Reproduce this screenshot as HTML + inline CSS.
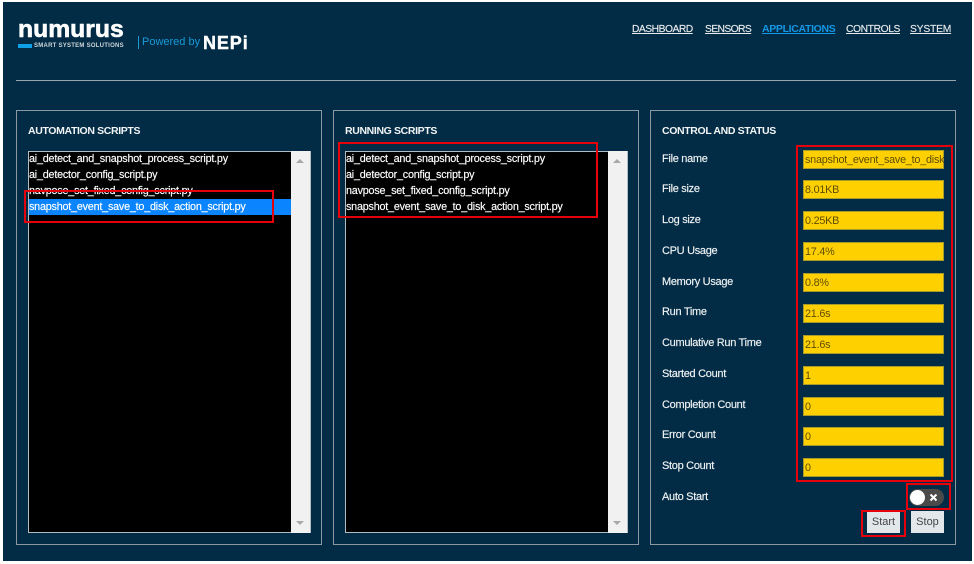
<!DOCTYPE html>
<html><head><meta charset="utf-8">
<style>
html,body{margin:0;padding:0;background:#fff;}
body{width:974px;height:564px;overflow:hidden;position:relative;font-family:"Liberation Sans",sans-serif;}
#w{position:absolute;left:0;top:0;width:974px;height:564px;filter:blur(.25px);}
.a{position:absolute;white-space:nowrap;}
#bg{left:3px;top:2px;width:969px;height:559px;background:#022c45;}
.panel{position:absolute;top:110px;width:304px;height:433px;border:1px solid #8b99a3;box-sizing:content-box;}
.h{font-size:10.5px;font-weight:bold;color:#f2f4f5;letter-spacing:-.36px;}
.list{position:absolute;top:151px;width:281px;height:380px;background:#000;border:1px solid #b5bcc1;}
.sb{position:absolute;top:151px;width:19px;height:382px;background:#f1f1f1;}
.up{position:absolute;left:5px;top:8px;width:0;height:0;border-left:4px solid transparent;border-right:4px solid transparent;border-bottom:4px solid #a8a8a8;}
.dn{position:absolute;left:5px;bottom:8px;width:0;height:0;border-left:4px solid transparent;border-right:4px solid transparent;border-top:4px solid #a8a8a8;}
.it{position:absolute;font-size:10.8px;letter-spacing:-.22px;color:#fff;white-space:nowrap;height:16px;line-height:16px;-webkit-text-stroke:.15px #fff;}
.l{position:absolute;left:662px;font-size:11px;letter-spacing:-.3px;color:#f0f3f5;white-space:nowrap;line-height:14px;-webkit-text-stroke:.15px #f0f3f5;}
.v{position:absolute;left:803px;width:141px;height:19px;background:#ffd000;border:0;box-shadow:inset 0 0 0 1px #a89a2a;font-size:10.8px;letter-spacing:-.22px;color:#5e4e00;line-height:20px;padding-left:2px;box-sizing:border-box;overflow:hidden;white-space:nowrap;}
.nav{position:absolute;top:23px;font-size:10.3px;color:#e6eaed;text-decoration:underline;white-space:nowrap;line-height:14px;-webkit-text-stroke:.15px #e6eaed;}
.red{position:absolute;border:2px solid #e6000c;box-sizing:border-box;}
.btn{position:absolute;top:511px;width:33px;height:22px;background:#e2e7ea;color:#444;font-size:11px;text-align:center;line-height:22px;}
</style></head>
<body>
<div id="w">
<div class="a" id="bg"></div>

<div class="a" style="left:18px;top:14px;font-size:24px;font-weight:bold;color:#fff;line-height:32px;transform:scaleX(1.03);transform-origin:0 0;-webkit-text-stroke:.6px #fff;">numurus</div>
<div class="a" style="left:18px;top:44px;width:14px;height:4px;background:#0fa0e6;"></div>
<div class="a" style="left:34px;top:42px;font-size:6px;font-weight:bold;color:#cfd6da;line-height:8px;letter-spacing:.25px;">SMART SYSTEM SOLUTIONS</div>
<div class="a" style="left:138px;top:36px;width:1px;height:13px;background:#1c9ad6;"></div>
<div class="a" style="left:142px;top:35px;font-size:11px;color:#1c9ad6;line-height:14px;">Powered by</div>
<div class="a" style="left:203px;top:34px;font-size:18px;font-weight:bold;color:#fff;line-height:19px;letter-spacing:.9px;-webkit-text-stroke:.4px #fff;">NEPi</div>

<div class="nav" style="left:632px;letter-spacing:-.5px;">DASHBOARD</div>
<div class="nav" style="left:705px;letter-spacing:-.6px;">SENSORS</div>
<div class="nav" style="left:762px;top:22px;color:#1597e5;font-weight:bold;font-size:10.5px;letter-spacing:-.33px;-webkit-text-stroke:0;">APPLICATIONS</div>
<div class="nav" style="left:846px;letter-spacing:-.4px;">CONTROLS</div>
<div class="nav" style="left:910px;letter-spacing:-.2px;">SYSTEM</div>

<div class="a" style="left:16px;top:80px;width:940px;height:1px;background:#9aa6ae;"></div>

<div class="panel" style="left:16px;"></div>
<div class="panel" style="left:333px;"></div>
<div class="panel" style="left:650px;"></div>

<div class="a h" style="left:28px;top:125px;">AUTOMATION SCRIPTS</div>
<div class="a h" style="left:345px;top:125px;">RUNNING SCRIPTS</div>
<div class="a h" style="left:662px;top:125px;">CONTROL AND STATUS</div>

<div class="list" style="left:28px;"></div>
<div class="sb" style="left:291px;"><div class="up"></div><div class="dn"></div></div>
<div class="a" style="left:29px;top:199px;width:262px;height:16px;background:#0a84ff;"></div>
<div class="it" style="left:29px;top:151px;">ai_detect_and_snapshot_process_script.py</div>
<div class="it" style="left:29px;top:167px;">ai_detector_config_script.py</div>
<div class="it" style="left:29px;top:183px;">navpose_set_fixed_config_script.py</div>
<div class="it" style="left:29px;top:199px;">snapshot_event_save_to_disk_action_script.py</div>

<div class="list" style="left:345px;"></div>
<div class="sb" style="left:608px;"><div class="up"></div><div class="dn"></div></div>
<div class="it" style="left:346px;top:151px;">ai_detect_and_snapshot_process_script.py</div>
<div class="it" style="left:346px;top:167px;">ai_detector_config_script.py</div>
<div class="it" style="left:346px;top:183px;">navpose_set_fixed_config_script.py</div>
<div class="it" style="left:346px;top:199px;">snapshot_event_save_to_disk_action_script.py</div>

<div class="l" style="top:152px;">File name</div><div class="v" style="top:150px;">snapshot_event_save_to_disk_action_script.py</div>
<div class="l" style="top:182px;">File size</div><div class="v" style="top:180px;">8.01KB</div>
<div class="l" style="top:213px;">Log size</div><div class="v" style="top:211px;">0.25KB</div>
<div class="l" style="top:244px;">CPU Usage</div><div class="v" style="top:242px;">17.4%</div>
<div class="l" style="top:275px;">Memory Usage</div><div class="v" style="top:273px;">0.8%</div>
<div class="l" style="top:305px;">Run Time</div><div class="v" style="top:304px;">21.6s</div>
<div class="l" style="top:336px;">Cumulative Run Time</div><div class="v" style="top:335px;">21.6s</div>
<div class="l" style="top:367px;">Started Count</div><div class="v" style="top:366px;">1</div>
<div class="l" style="top:398px;">Completion Count</div><div class="v" style="top:397px;">0</div>
<div class="l" style="top:428px;">Error Count</div><div class="v" style="top:427px;">0</div>
<div class="l" style="top:459px;">Stop Count</div><div class="v" style="top:458px;">0</div>
<div class="l" style="top:490px;">Auto Start</div>

<div class="a" style="left:909px;top:489px;width:35px;height:17px;border-radius:9px;background:#4a4a4a;"></div>
<div class="a" style="left:910px;top:490px;width:15px;height:15px;border-radius:50%;background:#fff;"></div>
<svg class="a" style="left:929px;top:493px;" width="9" height="9" viewBox="0 0 9 9"><path d="M1.5 1.5L7.5 7.5M7.5 1.5L1.5 7.5" stroke="#fff" stroke-width="2"/></svg>

<div class="btn" style="left:867px;">Start</div>
<div class="btn" style="left:911px;">Stop</div>

<div class="red" style="left:24px;top:190px;width:250px;height:33px;"></div>
<div class="red" style="left:338px;top:142px;width:260px;height:76px;"></div>
<div class="red" style="left:796px;top:145px;width:157px;height:337px;"></div>
<div class="red" style="left:906px;top:483px;width:45px;height:27px;"></div>
<div class="red" style="left:861px;top:510px;width:45px;height:27px;"></div>
</div>
</body></html>
